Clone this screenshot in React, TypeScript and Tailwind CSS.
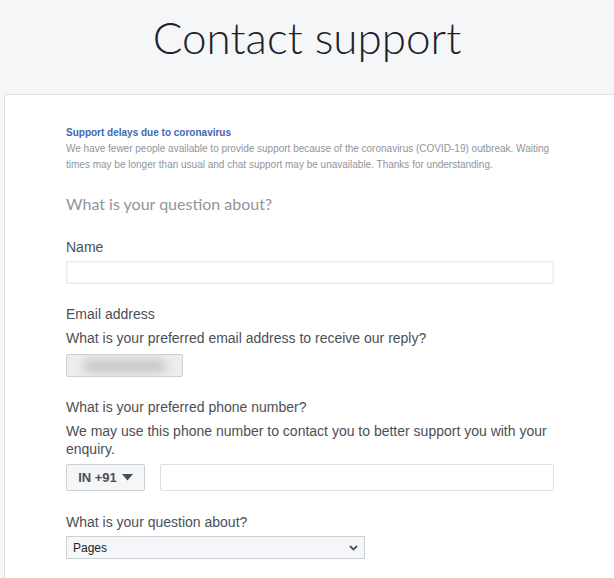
import React from "react";

export default function App() {
  return (
    <div className="min-h-[578px] w-[614px] overflow-hidden bg-[#f5f6f7] font-['Liberation_Sans',Arial,sans-serif]">
      <div className="h-[94px] pt-[9px] text-center">
        <h1 className="font-['Lato',sans-serif] text-[44px] font-light leading-[56px] text-[#1d2129]">
          Contact support
        </h1>
      </div>
      <div className="ml-[4px] mr-[-20px] rounded-tl-[3px] border border-[#dddfe2] bg-white pb-[40px] pl-[61px] pt-[30px]">
        <div className="w-[488px]">
          <div className="text-[10px] font-bold leading-[16px] text-[#4267b2]">
            Support delays due to coronavirus
          </div>
          <p className="text-[10px] leading-[16px] text-[#90949c]">
            We have fewer people available to provide support because of the coronavirus (COVID-19) outbreak. Waiting times may be longer than usual and chat support may be unavailable. Thanks for understanding.
          </p>
          <h2 className="mt-[21px] font-['Lato',sans-serif] text-[16px] leading-[20px] text-[#90949c]">
            What is your question about?
          </h2>

          <div className="mt-[24px] text-[14px] leading-[18px] text-[#4b4f56]">Name</div>
          <div className="mt-[5px] h-[23px] w-[488px] border border-[#e9ebee] bg-white shadow-[inset_0_0_0_1px_#f5f6f7]" />

          <div className="mt-[21px] text-[14px] leading-[18px] text-[#4b4f56]">Email address</div>
          <div className="mt-[6px] text-[14px] leading-[18px] text-[#4b4f56]">
            What is your preferred email address to receive our reply?
          </div>
          <div className="relative mt-[7px] h-[23px] w-[117px] overflow-hidden rounded-[2px] border border-[#ccd0d5] bg-[#ededed]">
            <div className="absolute left-[16px] top-[4px] h-[14px] w-[84px] rounded-full bg-[#c9c9c9] blur-[5px]" />
          </div>

          <div className="mt-[21px] text-[14px] leading-[18px] text-[#4b4f56]">
            What is your preferred phone number?
          </div>
          <div className="mt-[6px] text-[14px] leading-[18px] text-[#4b4f56]">
            We may use this phone number to contact you to better support you with your enquiry.
          </div>
          <div className="mt-[6px] flex gap-[15px]">
            <div className="flex h-[27px] w-[79px] items-center justify-center gap-[5px] rounded-[2px] border border-[#ccd0d5] bg-[#f5f6f7] text-[13px] font-bold text-[#4b4f56]">
              <span>IN +91</span>
              <svg width="11" height="7" viewBox="0 0 11 7">
                <path d="M0 0 H11 L5.5 6.5 Z" fill="#4b4f56" />
              </svg>
            </div>
            <div className="h-[27px] flex-1 rounded-[2px] border border-[#dddfe2] bg-white" />
          </div>

          <div className="mt-[22px] text-[14px] leading-[18px] text-[#4b4f56]">
            What is your question about?
          </div>
          <div className="mt-[5px] flex h-[23px] w-[299px] items-center justify-between border border-[#ccd0d5] bg-[#f5f6f7] pl-[6px] pr-[6px] text-[12px] text-[#1d2129]">
            <span>Pages</span>
            <svg width="9" height="6" viewBox="0 0 9 6">
              <path d="M1 1 L4.5 4.5 L8 1" stroke="#4b4f56" strokeWidth="1.8" fill="none" />
            </svg>
          </div>
        </div>
      </div>
    </div>
  );
}
